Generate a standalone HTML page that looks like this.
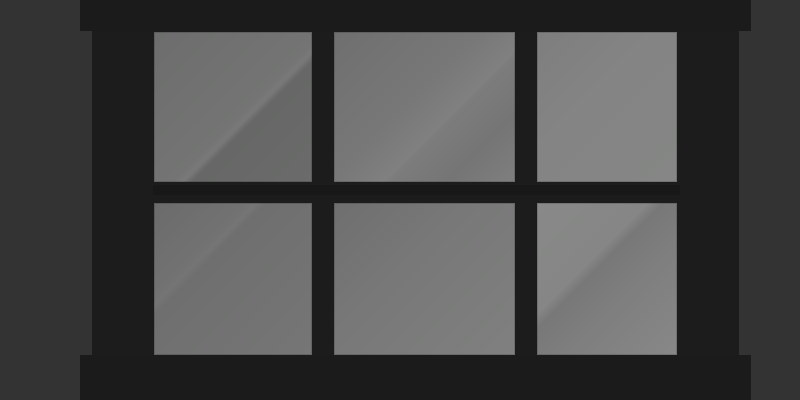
<!DOCTYPE html>
<html><head><style>
html,body{margin:0;padding:0;}
body{width:800px;height:400px;background:#333;position:relative;overflow:hidden;}
.b{position:absolute;background:#1c1c1c;}
.p{position:absolute;box-shadow:inset 0 0 0 1px rgba(0,0,0,.15);}
.a{background:linear-gradient(135deg,#6c6d6c 0%,#737473 55%,#787978 58%,#666766 61%,#6a6b6a 100%);}
.c{background:linear-gradient(135deg,#6e6f6e 0%,#777877 45%,#7f807f 60%,#7b7c7b 62%,#747574 80%,#7e7f7e 100%);}
.d{background:linear-gradient(135deg,#7d7e7d 0%,#838483 40%,#858685 100%);}
</style></head><body>
<div class="b" style="left:80px;top:0;width:671px;height:31px;background:#1b1b1b"></div>
<div class="b" style="left:92px;top:31px;width:647px;height:324px"></div>
<div class="b" style="left:80px;top:355px;width:671px;height:45px;background:#1b1b1b"></div>
<div class="b" style="left:153px;top:185px;width:527px;height:10px;background:#181818"></div>
<div class="p a" style="left:154px;top:32px;width:158px;height:150px"></div>
<div class="p c" style="left:334px;top:32px;width:181px;height:150px"></div>
<div class="p d" style="left:537px;top:32px;width:140px;height:150px"></div>
<div class="p" style="left:154px;top:203px;width:158px;height:152px;background:linear-gradient(135deg,#6a6b6a 0%,#717271 30%,#747574 33%,#6e6f6e 36%,#757675 100%)"></div>
<div class="p" style="left:334px;top:203px;width:181px;height:152px;background:linear-gradient(135deg,#6e6f6e 0%,#777877 40%,#7f807f 100%)"></div>
<div class="p" style="left:537px;top:203px;width:140px;height:152px;background:linear-gradient(135deg,#888988 0%,#858685 38%,#777877 43%,#7d7e7d 60%,#878887 100%)"></div>
</body></html>
